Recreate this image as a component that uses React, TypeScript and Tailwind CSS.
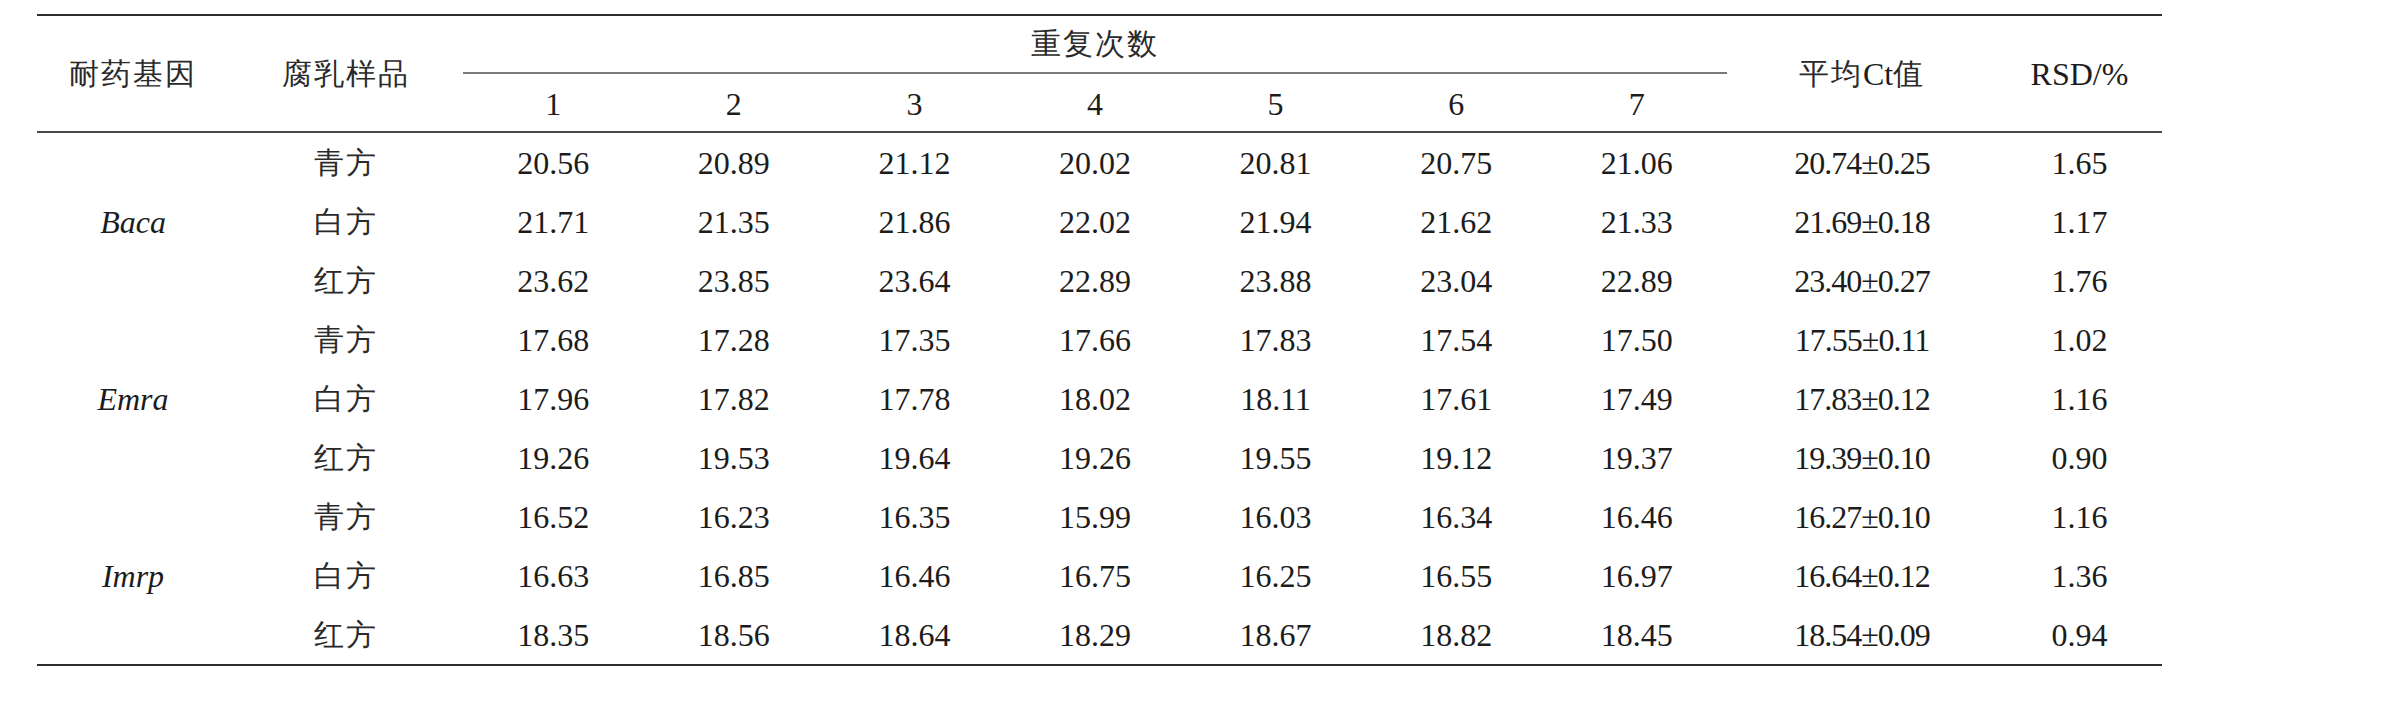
import React from 'react';

type Row = { sample: string; values: string[]; mean: string; sd: string; rsd: string };

const groups: { gene: string; rows: Row[] }[] = [
  {
    gene: 'Baca',
    rows: [
      { sample: '青方', values: ['20.56', '20.89', '21.12', '20.02', '20.81', '20.75', '21.06'], mean: '20.74', sd: '0.25', rsd: '1.65' },
      { sample: '白方', values: ['21.71', '21.35', '21.86', '22.02', '21.94', '21.62', '21.33'], mean: '21.69', sd: '0.18', rsd: '1.17' },
      { sample: '红方', values: ['23.62', '23.85', '23.64', '22.89', '23.88', '23.04', '22.89'], mean: '23.40', sd: '0.27', rsd: '1.76' },
    ],
  },
  {
    gene: 'Emra',
    rows: [
      { sample: '青方', values: ['17.68', '17.28', '17.35', '17.66', '17.83', '17.54', '17.50'], mean: '17.55', sd: '0.11', rsd: '1.02' },
      { sample: '白方', values: ['17.96', '17.82', '17.78', '18.02', '18.11', '17.61', '17.49'], mean: '17.83', sd: '0.12', rsd: '1.16' },
      { sample: '红方', values: ['19.26', '19.53', '19.64', '19.26', '19.55', '19.12', '19.37'], mean: '19.39', sd: '0.10', rsd: '0.90' },
    ],
  },
  {
    gene: 'Imrp',
    rows: [
      { sample: '青方', values: ['16.52', '16.23', '16.35', '15.99', '16.03', '16.34', '16.46'], mean: '16.27', sd: '0.10', rsd: '1.16' },
      { sample: '白方', values: ['16.63', '16.85', '16.46', '16.75', '16.25', '16.55', '16.97'], mean: '16.64', sd: '0.12', rsd: '1.36' },
      { sample: '红方', values: ['18.35', '18.56', '18.64', '18.29', '18.67', '18.82', '18.45'], mean: '18.54', sd: '0.09', rsd: '0.94' },
    ],
  },
];

// chinese text falls back to the CJK sans, kept a touch lighter like the song face
const Zh = ({ children }: { children: React.ReactNode }) => (
  <span className="font-light text-[30px] tracking-[2px] text-[#2a2a2a]">{children}</span>
);

const Cell = ({ children, className = '' }: { children: React.ReactNode; className?: string }) => (
  <div className={`flex items-center justify-center font-[Liberation_Serif,serif] ${className}`}>{children}</div>
);

export default function App() {
  return (
    <div className="bg-white w-[2384px] h-[702px] pt-[14px] pl-[37px] text-[32px] leading-none text-[#1c1c1c]">
      <div className="w-[2125px] border-t-2 border-b-2 border-[#2e2e2e] font-[Liberation_Serif,serif]">
        {/* header */}
        <div className="grid grid-cols-[192px_234px_1264px_270px_165px] h-[117px] border-b-2 border-[#4a4a4a]">
          <Cell><Zh>耐药基因</Zh></Cell>
          <Cell><Zh>腐乳样品</Zh></Cell>
          <div className="flex flex-col">
            <Cell className="h-[58px] border-b-2 border-[#7a7a7a]"><Zh>重复次数</Zh></Cell>
            <div className="grid grid-cols-7 flex-1">
              {[1, 2, 3, 4, 5, 6, 7].map((n) => (
                <Cell key={n} className="pt-[2px]">{n}</Cell>
              ))}
            </div>
          </div>
          <Cell>
            <Zh>平均</Zh>
            <span>Ct</span>
            <Zh>值</Zh>
          </Cell>
          <Cell>RSD/%</Cell>
        </div>

        {/* body */}
        {groups.map((g) => (
          <div key={g.gene} className="flex">
            <Cell className="w-[192px] italic">{g.gene}</Cell>
            <div className="flex flex-col">
              {g.rows.map((r) => (
                <div key={r.sample} className="grid grid-cols-[234px_1264px_270px_165px] h-[59px]">
                  <Cell><Zh>{r.sample}</Zh></Cell>
                  <div className="grid grid-cols-7">
                    {r.values.map((v, i) => (
                      <Cell key={i}>{v}</Cell>
                    ))}
                  </div>
                  <Cell className="tracking-[-1px]">
                    {r.mean}±{r.sd}
                  </Cell>
                  <Cell>{r.rsd}</Cell>
                </div>
              ))}
            </div>
          </div>
        ))}
      </div>
    </div>
  );
}
